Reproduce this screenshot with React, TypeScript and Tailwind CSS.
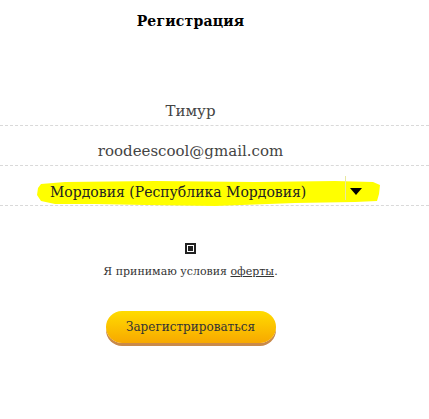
import React from "react";

function Field({ children }: { children: React.ReactNode }) {
  return (
    <div className="h-[40px] flex items-end justify-center pb-[3px] border-b border-dashed border-[#d9d9d9] pr-[48px]">
      {children}
    </div>
  );
}

export default function App() {
  return (
    <div
      className="w-[429px] h-[419px] bg-white text-[#333]"
      style={{ fontFamily: '"DejaVu Serif", "Liberation Serif", serif' }}
    >
      <h1 className="pt-[11px] text-center pr-[48px] text-[14px] font-bold text-black tracking-[0.2px]">
        Регистрация
      </h1>
      <div className="mt-[54px]">
        <Field>
          <span className="text-[15px] text-[#444]">Тимур</span>
        </Field>
        <Field>
          <span className="text-[15px] text-[#444]">roodeescool@gmail.com</span>
        </Field>
        <div className="relative h-[40px] border-b border-dashed border-[#d9d9d9]">
          <svg className="absolute left-[35px] top-[14px]" width="346" height="27" viewBox="0 0 346 27">
            <path
              d="M6 4 L30 2 L120 1 L220 2 L300 1 L338 2 L345 5 L344 14 L342 21 L320 22 L260 23 L180 26 L110 25 L60 24 L20 24 L6 21 L2 15 L3 8 Z"
              fill="#ffff00"
            />
          </svg>
          <div className="absolute left-[50px] top-[16px] text-[14px] text-[#222] leading-[20px]">
            Мордовия (Республика Мордовия)
          </div>
          <div className="absolute left-[345px] top-[10px] w-px h-[24px] bg-[#e8e8a0]" />
          <div className="absolute left-[350px] top-[22px] w-0 h-0 border-l-[6px] border-r-[6px] border-t-[7px] border-l-transparent border-r-transparent border-t-black" />
        </div>
      </div>
      <div className="flex flex-col items-center pr-[48px] mt-[37px]">
        <div className="w-[11px] h-[11px] border-[2px] border-[#222] flex items-center justify-center">
          <div className="w-[5px] h-[5px] bg-[#222]" />
        </div>
        <p className="mt-[10px] text-[11px] text-[#333]">
          Я принимаю условия <span className="underline">оферты</span>.
        </p>
        <button className="mt-[30px] w-[170px] h-[32px] rounded-full bg-gradient-to-b from-[#ffdc00] to-[#f7a800] shadow-[0_3px_0_#c98a4a] text-[12px] text-[#333]">
          Зарегистрироваться
        </button>
      </div>
    </div>
  );
}
